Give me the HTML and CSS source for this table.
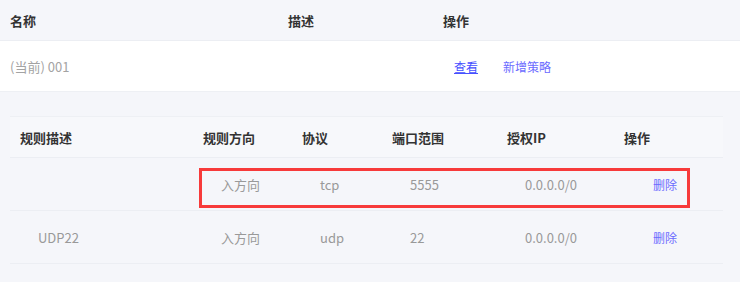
FILE: index.html
```html
<!DOCTYPE html>
<html lang="zh">
<head>
<meta charset="utf-8">
<link rel="stylesheet" href="styles.css">
</head>
<body>
<div class="outer">
  <div class="orow ohead">
    <div class="oc c-name">名称</div>
    <div class="oc c-desc">描述</div>
    <div class="oc c-ops">操作</div>
  </div>
  <div class="orow obody">
    <div class="oc c-name muted">(当前) 001</div>
    <div class="oc c-desc"></div>
    <div class="oc c-ops"><a class="link view" href="#">查看</a><a class="link add" href="#">新增策略</a></div>
  </div>
  <div class="expand">
    <div class="inner">
      <div class="irow ihead">
        <div class="ic w1">规则描述</div>
        <div class="ic w2">规则方向</div>
        <div class="ic w3">协议</div>
        <div class="ic w4">端口范围</div>
        <div class="ic w5">授权IP</div>
        <div class="ic w6">操作</div>
      </div>
      <div class="irow ibody">
        <div class="ic w1"></div>
        <div class="ic w2">入方向</div>
        <div class="ic w3">tcp</div>
        <div class="ic w4">5555</div>
        <div class="ic w5">0.0.0.0/0</div>
        <div class="ic w6"><a class="link del" href="#">删除</a></div>
        <div class="highlight"></div>
      </div>
      <div class="irow ibody">
        <div class="ic w1">UDP22</div>
        <div class="ic w2">入方向</div>
        <div class="ic w3">udp</div>
        <div class="ic w4">22</div>
        <div class="ic w5">0.0.0.0/0</div>
        <div class="ic w6"><a class="link del" href="#">删除</a></div>
      </div>
    </div>
  </div>
</div>
</body>
</html>
```

FILE: styles.css
```css
html, body {
  margin: 0;
  padding: 0;
}
body {
  width: 740px;
  height: 282px;
  overflow: hidden;
  background: #f5f6fa;
  font-family: "Noto Sans CJK SC", "Noto Sans", sans-serif;
  font-size: 13px;
  color: #999;
}
.orow {
  display: flex;
  align-items: center;
}
.ohead {
  height: 40px;
  background: #f5f6fa;
  border-bottom: 1px solid #eceef3;
  color: #333;
  font-weight: 700;
}
.obody {
  height: 50px;
  background: #fff;
  border-bottom: 1px solid #eef0f4;
}
.oc {
  box-sizing: border-box;
  padding-left: 10px;
  white-space: nowrap;
}
.c-name { width: 278px; }
.c-desc { width: 155px; }
.c-ops { flex: 1; display: flex; align-items: center; }
.obody .c-ops { padding-left: 21px; }
.muted { color: #a3a3a3; }
.link {
  font-size: 12px;
  color: #6b6bff;
  text-decoration: none;
}
.link.view {
  color: #4650ff;
  text-decoration: underline;
  margin-right: 25px;
}
.expand {
  padding: 24px 17px 0 10px;
}
.inner {
  border-top: 1px solid #eef0f4;
}
.irow {
  display: flex;
  align-items: center;
  position: relative;
}
.ihead {
  height: 40px;
  background: #f7f8fb;
  border-bottom: 1px solid #eceef3;
  color: #333;
  font-weight: 700;
}
.ibody {
  height: 52px;
  border-bottom: 1px solid #eceef3;
}
.ic {
  box-sizing: border-box;
  padding-left: 10px;
  white-space: nowrap;
}
.ibody .ic { padding-left: 28px; }
.ibody .ic.w6 { padding-left: 39px; }
.w1 { width: 183px; }
.w2 { width: 99px; }
.w3 { width: 90px; }
.w4 { width: 115px; }
.w5 { width: 117px; }
.w6 { flex: 1; }
.highlight {
  position: absolute;
  left: 189px;
  top: 10px;
  width: 491px;
  height: 40px;
  box-sizing: border-box;
  border: 3px solid #f73a3a;
}
```
